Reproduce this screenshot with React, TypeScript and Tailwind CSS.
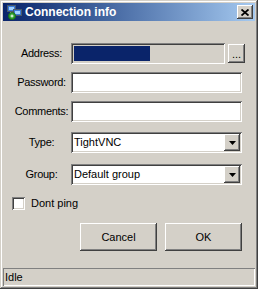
import React from "react";

const raised =
  "shadow-[inset_-1px_-1px_#404040,inset_1px_1px_#ffffff,inset_-2px_-2px_#808080,inset_2px_2px_#d4d0c8]";
const sunken =
  "shadow-[inset_1px_1px_#808080,inset_-1px_-1px_#ffffff,inset_2px_2px_#404040,inset_-2px_-2px_#d4d0c8]";

const TitleIcon = () => (
  <svg width="15" height="15" viewBox="0 0 15 15" className="shrink-0">
    <rect x="0.5" y="0.5" width="8" height="6" fill="#3a7ad8" stroke="#4a5a6a" />
    <rect x="2" y="2" width="5" height="3" fill="#9fd0ff" />
    <rect x="6.5" y="4.5" width="8" height="6" fill="#3a7ad8" stroke="#4a5a6a" />
    <rect x="8" y="6" width="5" height="3" fill="#9fd0ff" />
    <rect x="3" y="7" width="3" height="1" fill="#c0c0c0" />
    <circle cx="5" cy="11" r="3.5" fill="#2fa52f" stroke="#1a6a1a" />
    <path d="M3.5 11h3M5 9.5v3" stroke="#ffffff" strokeWidth="1" />
  </svg>
);

// labels sit centred in their column, as in the original form
const Label = ({ text }: { text: string }) => (
  <div className="w-[55px] ml-[11px] mr-[2px] text-center shrink-0 tracking-[-0.3px] whitespace-nowrap">
    {text}
  </div>
);

const Field = ({ className = "" }: { className?: string }) => (
  <div className={`h-[21px] bg-white ${sunken} ${className}`} />
);

const Combo = ({ value }: { value: string }) => (
  <div className={`h-[21px] w-[171px] bg-white ${sunken} flex items-center p-[2px]`}>
    <div className="flex-1 pl-[1px] leading-none">{value}</div>
    <div className={`w-[16px] h-[17px] bg-[#d4d0c8] ${raised} flex items-center justify-center`}>
      <svg width="7" height="4" viewBox="0 0 7 4">
        <path d="M0 0h7L3.5 4z" fill="#000" />
      </svg>
    </div>
  </div>
);

export default function App() {
  return (
    <div
      className={`w-[258px] h-[289px] bg-[#d4d0c8] p-[3px] flex flex-col text-[11px] leading-[13px] text-black font-['Liberation_Sans',Arial,sans-serif] shadow-[inset_-1px_-1px_#404040,inset_1px_1px_#d4d0c8,inset_-2px_-2px_#808080,inset_2px_2px_#ffffff]`}
    >
      <div className="h-[18px] bg-gradient-to-r from-[#0a246a] to-[#a6caf0] flex items-center pl-[4px] pr-[2px]">
        <TitleIcon />
        <div className="ml-[3px] text-white font-bold text-[12px] flex-1 leading-none">
          Connection info
        </div>
        <div className={`w-[16px] h-[14px] bg-[#d4d0c8] ${raised} flex items-center justify-center`}>
          <svg width="8" height="7" viewBox="0 0 8 7">
            <path d="M0.5 0.5l7 6M7.5 0.5l-7 6" stroke="#000" strokeWidth="1.8" />
          </svg>
        </div>
      </div>

      <div className="flex-1 flex flex-col">
        <div className="flex items-center mt-[22px]">
          <Label text="Address:" />
          <div className={`h-[21px] w-[154px] bg-[#d4d0c8] ${sunken} p-[3px]`}>
            <div className="h-full w-[76px] bg-[#0a246a]" />
          </div>
          <div
            className={`ml-[3px] w-[17px] h-[19px] bg-[#d4d0c8] ${raised} flex items-end justify-center pb-[3px] leading-none`}
          >
            ...
          </div>
        </div>

        <div className="flex items-center mt-[8px]">
          <Label text="Password:" />
          <Field className="w-[171px]" />
        </div>

        <div className="flex items-center mt-[8px]">
          <Label text="Comments:" />
          <Field className="w-[171px]" />
        </div>

        <div className="flex items-center mt-[10px]">
          <Label text="Type:" />
          <Combo value="TightVNC" />
        </div>

        <div className="flex items-center mt-[11px]">
          <Label text="Group:" />
          <Combo value="Default group" />
        </div>

        <div className="flex items-center h-[13px] mt-[12px] ml-[9px]">
          <div className={`w-[13px] h-[13px] bg-white ${sunken}`} />
          <span className="ml-[6px]">Dont ping</span>
        </div>

        <div className="flex mt-[13px] ml-[77px] gap-[8px]">
          <button className={`w-[77px] h-[28px] bg-[#d4d0c8] ${raised}`}>Cancel</button>
          <button className={`w-[77px] h-[28px] bg-[#d4d0c8] ${raised}`}>OK</button>
        </div>
      </div>

      <div className="h-[18px] shadow-[inset_1px_1px_#808080,inset_-1px_-1px_#ffffff] flex items-center pl-[2px]">
        Idle
      </div>
    </div>
  );
}
